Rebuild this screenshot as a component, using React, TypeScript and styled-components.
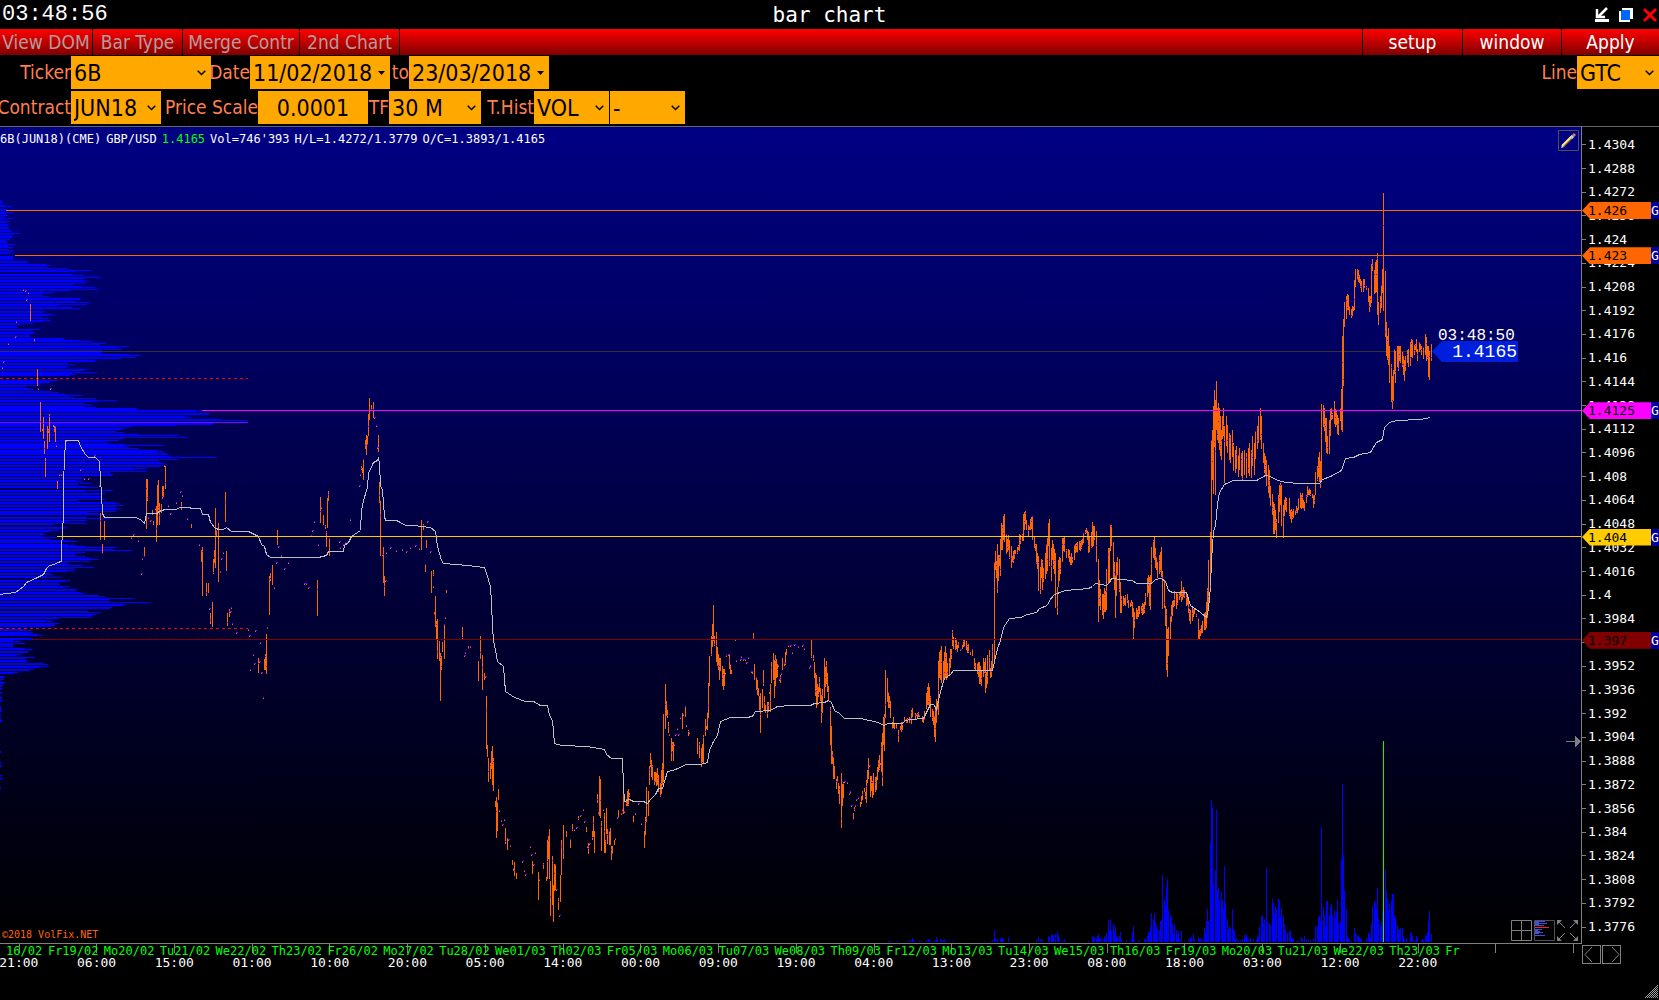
import React from "react";
import styled, { createGlobalStyle } from "styled-components";

/* ---------- data ---------- */

const CHART_W = 1581;
const CHART_H = 816;

// Every series is stored in thirds of a unit, relative to the origin of its segment.
type Segment = { x: number; y: number; d: string };

// "x,y" is a single trade, "x,high,low" is a bar.
const priceSegments: Segment[] = [
  {
    x: 0,
    y: 53,
    d: `70,330 76,335 85,339 79,360 49,427 46,471 25,492 10,547 7,564 102,478,488 115,627 151,627 169,798 178,887 184,885 241,870 253,899 265,897 298,918 283,829 198,783
91,372,422 112,568,618 121,666,756 130,711,777 127,747,753 133,783,822 136,834,891 142,738,806 145,747,760 148,702,786 160,736,740 163,738,756 166,738,786 172,903,927 301,999,1080 307,1092,1122 313,1023,1080 439,897,1047 442,897,963 445,1016 451,1023 457,990,1006 460,1023,1035 466,988 469,978,1085 472,915,1036 475,900,990 478,969,1036 484,972,999 487,918,958 490,918,950 493,858 496,858,927 505,978 511,1002 529,971 541,936 547,950 544,966,990 562,1017 574,1032,1044 646,984,1164 649,1050,1072 655,1029,1206 676,936,1026
393,1074 400,1065 416,1084 433,1102,1131 427,1137 424,1183 598,1095 604,1110,1146 607,1101,1248 619,1209,1248 625,1209,1239 628,1287 631,1299,1332 637,1266,1341 640,1137,1182 643,1110,1150 661,1176 664,1137 670,1119 679,1113,1173 682,1299,1338 688,1287,1312 694,1284 690,1296 697,1332 709,1359 745,1350 748,1368 760,1425 763,1452 752,1470 766,1353 775,1434,1479 778,1446 781,1389 785,1479 790,1556 794,1437,1470 797,1422,1470 799,1362,1482 802,1344 808,1188,1305 811,1180,1205 817,1155,1215 823,1224 829,1149 832,1050,1095 835,1101 844,1130 853,1167 865,1149 913,1212 919,1212 925,1224 934,1070 937,1053 943,1026 952,1200,1308 955,1095 961,951,1029 964,984 970,1005,1035 976,1035,1047 979,1053,1101 982,954,1044 985,933,963 988,1074,1128 1018,1086 1021,1104 1030,1095 1036,1090 1042,1090 1051,1020 1078,918 1081,885
1084,858,870 1087,864,880 1090,837,900 1096,780,806 1099,765,825 1102,770,798 1105,702,768 1108,654,720 1114,675,690 1120,666,714 1123,714 1129,738 1133,804 1135,765,816 1138,906,970 1141,963,1128 1150,1101,1210 1153,1188,1248 1147,1125 1159,1119 1171,1104 1189,1113 1156,1203
1207,1110 1219,1116 1231,1104 1245,1098 1257,1107 1263,1020,1110 1269,1032,1050 1281,1026 1278,1080,1104 1290,1116 1299,1170,1188`,
  },
  {
    x: 380,
    y: 433,
    d: `136,12,35 154,33,98 160,83 163,158,166 166,108,200 169,183,237 172,177,296 178,243,303 181,279,423 184,288,330 187,246,276 193,192,297 196,174 199,90,100 247,201,237 253,290 256,279 265,258,268 271,261 295,303,363 301,228,297 307,285,390 313,339,360 316,351 319,408,567 322,555,592 325,594,666 331,609,657 334,573,627 337,558,675 340,594,693 346,723,742 349,711,834 352,726,812 355,687,720 358,750,757 364,785 367,795 373,780 376,804,852 382,834,870 385,840 391,860 397,900,915 400,924,933 403,906,948 409,939,957 427,906 433,933 436,945 451,863 454,887 457,903,942 460,915 466,879 475,936,1020 479,962 490,909,927 499,951,963 502,840,957 505,828,897 508,807,957 511,963,1068 517,888,1035 520,975,1086 523,912,993 526,912,990 529,992 535,1014,1050 538,1068 541,945,1026 544,840,945 550,795,897 559,813,831 571,837,864 577,792,813 583,812 589,804 595,768,780 601,770 610,752 613,788 619,801,816 622,861 625,850,882 628,852 637,813,840 640,768,830 643,813,879 652,702,729 655,760 658,648,768 661,657,775 664,783,873 670,750 673,760,879 676,840,879 679,744,822 682,807,852 688,813,855 691,804,855 694,858,900 697,858,882 703,840,855 706,838 712,776 715,750,775 724,762 727,750 730,681,762 733,758 739,717,738 742,693,738 745,687,738 748,699,711 760,768,787 766,762 775,732`,
  },
  {
    x: 640,
    y: 473,
    d: `4,674 13,693,744 16,651,705 19,561,666 25,573,648 28,498,555 31,459,502 34,480,531 37,495,540 43,516,555 46,516,546 49,516,558 52,506,558 55,525,576 61,549,591 64,510,582 67,489,555 70,342,546 76,252,387 79,303,348 82,330,354 85,366,399 88,405 94,414,483 97,426,452 100,426,483 103,437 107,407 112,387 115,405 121,354 127,339,387 130,345 136,318,351 139,378 145,390,408 148,399 172,414,462 178,426,474 184,444,501 187,432,486 190,405,489 196,357,408 199,378,387 202,336,390 205,249,354 208,168,258 214,108,168 217,72,141 220,15,122 223,108,138 229,96,186 232,141,198 235,162,210 238,174,240 241,174,213 247,198,258 250,207,270 253,207,258 256,219,225 259,167,171 265,165 268,162,207 271,192,221 274,210,221 286,120 289,183 301,180 304,173 310,182 316,180 319,190 325,174 334,216 337,213,222 340,99,120 343,192,240 349,231,270 352,240,285 355,264,288 358,288,336 361,279,399 367,267,324 370,210,258 373,288,330 376,315,340 382,306,354 385,306,336 388,276,282 391,252,336 394,186,249 400,159,240 403,180,294 406,165,258 409,177,234 412,192,231 415,200 418,240 421,225,250 424,219,225 427,174,210 433,189,198 436,156,195 439,147,165 445,140 451,140 457,160 463,136 475,141 487,140 493,148 508,206 511,200 514,117,174 520,165,183 523,186,234 526,219,288 529,225,324 532,252,315 535,261,290 538,231,276 541,264,303 544,285,369 547,267,339 553,174,294 556,201,262 559,183,252 562,219,276 565,258,303 571,321,435 574,378,492 577,453,492 580,471,537 583,498,537 589,537,567 592,528,546 595,549,582 598,558,612 604,519,684 607,552,618 610,546,594 613,546 622,549 628,584 631,576 634,618 640,639,660 643,621,633 646,618 649,601 655,594 661,606,621 664,588,612 667,573,600 673,566,577 676,576,597 679,540,609 682,510,550 685,474,537 688,500 691,528,591 694,530,576 697,543,594 700,519,585 706,531,576 709,530,573 712,501,540 715,480,516 718,465,510 721,489,492 724,426,516 727,399,558 730,351,435 733,342,453 736,210,354 742,234,306 745,276,324 748,288,324 751,303,354 757,366,387 760,351,384 763,372,387 769,372,387 775,390,426 781,378,390 784,366,396 787,366,390 793,352,367 799,357,368 802,354,368 808,352,369 811,357 814,330,372 817,324,350 826,340,357 829,346 832,340,354 835,336,350 838,345,350 847,350,368 850,351,368 853,333,360 859,279,327 862,261,315 865,249,315 868,261,324 871,289,351 877,327,363 880,333,375 883,348,411 886,318,426 889,297,369 892,303,330 895,183,345 898,156,234 901,150,240 904,138,249 910,183,249 913,156,240 916,138,234 919,159,240 922,190,234 928,174,225 931,147,204 934,147,177 937,90,138 940,111,147 946,114,150 949,117,147 952,135,157 955,128,145 961,150 967,135,147 970,121,141 973,120,140 979,123,150 982,135,159 985,132,160 991,157,165 997,148,168 1003,174,207 1006,189,210 1012,189,222 1015,186,231 1018,186,252 1021,198,252 1024,210,258 1030,174,231 1033,186,219 1036,174,279 1039,216,264 1042,165,252 1048,150,210 1051,204,234 1054,183,231 1057,132,210`,
  },
  {
    x: 940,
    y: 353,
    d: `163,246,546 166,213,270 169,243,294 172,192,339 175,225,303 178,225,258 181,177,288 184,129,210 187,135,210 190,108,180 193,102,186 199,162,222 202,177,216 205,165,210 208,180,237 214,198,264 217,228,246 220,213,248 223,210,237 226,210,222 232,201,222 235,195,210 238,162,213 241,165,192 247,162,183 250,102,183 253,96,150 256,93,132 259,120,150 265,135,168 268,138,150 271,117,150 274,111,147 277,108,180 283,171,204 286,192,213 289,192,252 292,219,267 295,228,333 301,261,342 304,237,294 307,240,330 310,264,306 316,219,297 319,192,282 322,174,273 325,129,198 328,117,258 334,204,303 337,180,240 340,192,267 343,207,282 346,219,384 352,321,405 355,240,321 358,231,303 361,234,282 367,174,246 370,174,213 373,168,216 379,207,234 385,207,234 388,210,246 391,228,255 394,220,255 397,231,250 403,195,240 406,192,220 409,189,216 412,186,220 418,183,210 421,183,213 424,180,207 427,177,195 430,159,189 436,150,162 439,144,160 442,150,180 445,156,219 448,168,216 454,156,204 457,126,201 460,138,198 463,138,180 469,153,246 475,237,426 478,300,378 481,327,390 487,342,405 490,342,417 493,324,396 496,333,396 499,267,390 505,204,312 508,204,303 511,135,213 514,135,198 520,186,297 523,246,330 526,285,414 529,246,348 532,231,285 538,237,336 541,306,399 544,348,399 550,348,378 553,354,375 556,345,378 562,342,370 565,360,384 571,366,381 574,360,378 577,366,411 580,384,477 583,396,444 589,384,417 592,390,417 595,378,410 598,378,402 604,378,399 607,369,405 610,372,403 613,366,400 616,339,375 622,294,351 625,285,339 628,291,378 631,285,390 634,201,312 640,180,234 643,171,240 646,204,264 649,231,270 652,246,294 658,225,282 661,216,276 664,201,291 667,273,387 673,300,384 676,378,438 679,387,570 682,447,591 685,441,528 691,408,477 694,375,426 697,363,408 700,360,384 703,333,378 709,339,387 712,342,375 718,336,360 721,333,351 724,303,366 727,330,360 730,321,351 733,330,354 739,342,378 742,354,375 745,363,399 748,387,423 751,390,432 757,384,423 760,387,411 763,384,402 769,402,411 775,414,480 778,450,480 781,447,468 784,435,462 787,423,460 793,399,450 796,396,450 799,366,444 802,324,414 805,240,390 811,156,321
814,-120,219 817,-150,0 820,-220,45 823,-270,-100 826,-240,45 829,-297,-150 832,-215,-120 835,-230,-110 838,-215,-90 841,-190,-70 844,-150,-60 847,-190,-120 850,-215,-130 853,-160,10 859,-190,-100 862,-165,-80 868,-140,-60 871,-135,-50 877,-150,-70 880,-110,-25 886,-90,-20 889,-100,-30 895,-75,-8 898,-95,-30 904,-80,-10 907,-85,4 913,-90,-15 919,-80,-5 925,-95,-20 928,-110,-10 934,-90,-5 937,-130,-40 943,-110,-15 946,-145,-60 952,-160,-90 955,-190,-110 961,-216,-120 964,-190,-90 970,-110,-50 973,-80,-20 976,-70,-10
979,-60,18 985,-45,39 988,-30,54 991,18,78 997,42,105 1000,66,162 1003,72,162 1006,90,150 1009,117,174 1015,45,129 1018,15,96 1021,9,75 1024,15,138 1030,75,174 1033,57,108 1036,51,90 1039,54,96 1048,54,108 1051,90,117 1054,87,129 1057,93,117 1060,87,114 1066,90,105 1069,78,100 1072,84,99 1075,54,90`,
  },
  {
    x: 1300,
    y: 113,
    d: `0,757,805 3,765,808 6,760,806 9,780,808 12,786,812 18,765,790 21,738,770 24,750,765 27,744,765 30,750,768 36,762,775 40,765,803 43,765,792 46,697,765 52,680,725 55,651,710 58,636,725 61,663,744 64,492,720 70,495,560 73,504,572 76,534,606 79,534,640 82,590,645 88,540,641 91,508,590 94,505,540 97,520,537 103,484,552 106,507,560 109,513,555 112,525,583 115,534,584 121,505,545 124,447,570 127,288,576 130,237,438 133,186,262 139,168,237 142,162,210 145,165,210 148,200,228 154,207,234 157,198,228 160,198,212 163,120,210 166,87,140 172,87,120 175,90,126 178,105,130 181,117,144 184,125,158 190,117,155 193,118,144 199,138,150 205,144,186 208,170,219 211,170,204 214,72,190 217,57,93 223,90,162 226,66,160 229,60,156 232,39,225 235,186,255 241,170,222 244,135,204 247,87,160 250,-139,216 256,93,290 259,246,348 262,290,363 265,264,375 268,320,432 274,372,486 277,408,507 280,390,483 283,327,402 286,333,429 292,318,381 295,318,393 298,318,363 301,320,372 307,336,380 310,348,405 313,360,423 316,350,396 322,330,369 325,327,381 331,306,378 334,297,350 337,300,354 343,315,345 346,312,330 349,297,336 352,327,362 358,306,336 361,312,330 364,318,344 370,321,357 376,282,345 379,291,363 382,318,357 385,318,411 388,333,420 394,312,363`,
  },
];

const averageSegments: Segment[] = [
  {
    x: 0,
    y: 53,
    d: `0,1244 18,1239 45,1237 70,1220 78,1206 105,1194 130,1184 140,1164 148,1157 163,1153 172,1147 184,1145 184,1110 187,1050 190,1010 190,915 193,830 196,790 196,781 235,781 241,800 256,822 265,832 286,832 298,843 301,900 304,940 307,1000 313,1012 406,1012 420,1017 433,1029 439,1000 472,1000 475,994 487,992 493,988 530,988 538,982 570,982 572,985 602,986 608,1003 626,1004 632,1026 645,1044 658,1048 670,1048 678,1042 694,1053 745,1055 775,1068 785,1092 793,1100 800,1122 811,1132 955,1132 978,1126 985,1114 1030,1114 1033,1096 1045,1087 1055,1068 1080,1050 1084,990 1090,960 1102,922 1106,880 1120,848 1132,842 1136,836 1138,850 1141,915 1147,930 1153,1010 1156,1021 1190,1021 1200,1026 1215,1035`,
  },
  {
    x: 380,
    y: 433,
    d: `100,-104 150,-99 165,-87 172,-40 177,-20 184,0 190,10 225,13 262,15 285,18 313,22 322,50 331,80 334,130 337,200 340,240 346,270 352,305 370,320 376,393 402,411 435,424 460,425 480,436 501,437 508,465 517,482 523,549 545,556 622,560 672,569 680,583 694,595 727,595 730,680 732,723 748,718 760,724 790,724`,
  },
  {
    x: 640,
    y: 473,
    d: `22,610 30,598 46,584 55,566 66,564 82,513 98,510 120,502 136,493 180,493 202,487 208,450 220,424 232,405 242,363 272,353 318,351 338,348 346,335 390,331 412,320 450,316 512,316 522,310 553,306 565,301 575,306 583,330 598,340 613,355 660,355 715,367 730,376 745,371 787,371 797,362 815,357 850,354 862,330 870,312 880,314 889,328 900,275 913,235 931,222 940,211`,
  },
  {
    x: 940,
    y: 353,
    d: `157,570 163,545 172,505 181,480 190,443 207,416 240,411 262,403 288,396 298,385 321,375 328,360 342,343 375,331 445,324 458,318 466,310 500,315 508,308 514,296 576,302 590,309 633,311 645,299 665,294 675,303 684,330 697,338 738,338 752,375 780,398 798,411 806,385 812,320 815,240 820,155 826,135 832,70 838,38 854,12 880,2 948,1 975,-14 990,-12 1000,-4 1015,1 1035,7`,
  },
  {
    x: 1300,
    y: 113,
    d: `0,730 57,730 66,718 90,710 124,692 135,654 160,651 178,644 210,638 230,608 247,597 252,562 268,547 290,541 360,538 392,532`,
  },
];

// "x,height"
const volumeSegments: Segment[] = [
  {
    x: 888,
    y: CHART_H - 1,
    d: `0,3 3,3 9,3 24,3 57,4 60,3 66,5 72,12 75,5 81,3 93,3 99,3 114,5 120,8 123,5 129,3 138,5 144,14 147,6`,
  },
  {
    x: 940,
    y: CHART_H - 1,
    d: `0,8 3,5 10,6 14,8 18,4 36,4 132,3 150,3 156,5 163,35 166,8 172,8 181,10 184,14 187,12 190,8 205,14 242,3 290,5 295,14 301,8 307,5 325,17 328,14 334,20 337,23 340,17 346,23 352,32 355,20 358,11 367,5 373,8 410,3 446,3 457,17 460,11 463,14 469,8 472,17 475,23 478,11 481,11 487,8 493,17 496,11 499,26 505,65 508,35 511,65 514,32 520,53 523,32 526,47 529,14 532,17 538,17 541,29 544,5 559,5 574,8 577,29 580,47 583,5 595,5 613,5 616,11 622,17 625,29 628,29 631,44 634,86 640,68 643,86 646,56 649,47 652,38 658,35 661,62 664,65 667,200 673,128 676,107 679,164 682,188 685,95 691,80 694,74 697,53 700,26 703,53 709,35 712,23 715,32 718,8 724,32 733,3 745,8 751,14 754,11 760,23 763,8 775,14 778,8 781,11 787,8 793,41 796,26 799,62 802,98 805,62 811,296 814,425 817,405 820,173 826,215 829,395 832,155 835,161 838,126 844,149 847,125 850,101 853,227 856,116 862,68 865,38 868,47 871,41 877,98 880,38 883,32 886,8 889,11 895,5 901,5 907,8 913,20 916,14 919,23 922,11 928,8 931,11 940,8 949,5 952,20 955,14 958,44 964,77 967,80 970,56 973,68 979,221 982,59 988,56 991,50 997,128 1000,116 1003,83 1006,107 1009,98 1015,128 1018,125 1021,74 1024,101 1030,77 1033,53 1036,35 1042,26 1048,32 1051,32 1054,14 1057,8 1060,11 1069,3 1075,3 1084,14 1087,8 1093,17 1099,8 1105,5 1111,5 1120,8`,
  },
  {
    x: 1260,
    y: CHART_H - 1,
    d: `166,47 172,47 175,74 178,77 181,62 184,344 190,104 193,80 196,50 199,122 202,122 208,80 211,104 214,113 217,80 223,95 226,71 229,90 232,125 235,56 241,60 244,245 247,473 250,260 253,155 259,98 262,17 265,11 268,5 274,3 283,41 286,26 292,17 295,20 298,14 301,8 304,8 313,3 319,11 325,26 328,26 331,11 334,53 337,107 343,122 346,116 349,98 352,161 355,68 361,47 364,59 367,92 376,218 379,152 382,131 385,95 388,116 394,122 397,143 400,143 403,80 406,71 412,50 415,38 418,35 421,41 427,41 430,17 433,8 439,11 448,3 451,26 454,29 457,17 463,5 469,17 472,11 484,5 487,8 490,5 496,20 499,17 502,29 505,62 508,92 514,23`,
  },
];

// Volume profile rows: "y,first,second", in thirds.
const profileRows = `60,6,3 66,6,6 75,15,36 87,21,18 96,39,18 105,24,15 114,39,12 123,27,21 132,24,24 141,27,27 150,33,33 159,60,39 168,39,36 177,30,18 183,21,24 192,45,24 198,24,39 207,24,42 216,39,24 228,42,39 234,39,39
243,81,87 252,138,153 261,144,204 270,276,228 282,222,255 291,303,255 300,249,261 309,258,219 318,246,285 327,297,213 336,162,132 345,129,147 354,243,240 363,231,273 372,261,174 381,216,240 393,135,132 402,162,147 411,126,147 420,153,129 429,99,63 438,48,51 447,120,96 456,102,102 465,90,93 474,195,186 480,243,279 489,321,300 498,387,352 507,366,306 516,306,306 522,387,423 531,408,363 540,288,286 549,204,225 558,207,198 567,267,252 576,291,216 582,228,210 600,174,150 606,150,123 615,123,78 624,87,102 633,150,177 642,198,246 651,222,288 660,351,291 669,252,276 678,255,288 684,411,411 690,606,588 699,627,627 708,555,573 717,663,744 729,640,640 735,528,396 744,378,363 753,351,372 762,417,537 771,564,372 780,357,318 789,327,375 795,492,375 801,388,417 810,471,471 813,492,471 819,501,508 828,510,651 837,537,478 846,480,495 855,495,480 864,443,402 873,443,333 882,339,336 891,243,258 900,231,249 909,276,234 918,261,294 930,339,255 939,315,303 948,303,303 957,315,234 966,345,357 975,369,348 984,363,348 993,348,264 999,297,318 1011,262,330 1020,262,204 1029,258,162 1041,198,195 1050,177,150 1059,132,140 1068,128,170 1077,155,210 1083,231,180 1092,204,228 1098,258,351 1107,342,396 1116,255,228 1125,228,255 1134,273,297 1143,270,207 1152,207,249 1161,282,225 1170,225,201 1179,150,162 1188,138,186 1200,210,195 1209,178,180 1218,210,189 1227,231,228 1236,243,255 1245,294,315 1254,402,327 1263,330,450 1272,378,369 1281,336,330 1293,264,303 1302,288,276 1311,276,177 1320,138,159 1329,180,165 1335,165,154 1347,75,96 1356,99,87 1362,114,129 1374,99,99 1380,40,63 1389,75,39 1395,40,42 1404,72,99 1413,87,84 1422,66,48 1431,105,78 1440,84,78 1449,132,144 1458,147,120 1467,102,90 1476,54,40 1488,12,15 1497,12,4 1506,15,12 1515,9,8 1524,6,3 1536,6,3 1551,6,6 1560,9,3 1578,4,4 1584,4,4 1590,4,6 1602,3,3 1611,4,4 1620,6,6 1713,3,3 1746,4,4 1755,6,4 1785,6,3 1794,9,3 1821,3,3`;

const minutes = ["21:00", "06:00", "15:00", "01:00", "10:00", "20:00", "05:00", "14:00", "00:00", "09:00", "19:00", "04:00", "13:00", "23:00", "08:00", "18:00", "03:00", "12:00", "22:00", "", ""];

const days = ["16/02", "Fr19/02", "Mo20/02", "Tu21/02", "We22/02", "Th23/02", "Fr26/02", "Mo27/02", "Tu28/02", "We01/03", "Th02/03", "Fr05/03", "Mo06/03", "Tu07/03", "We08/03", "Th09/03", "Fr12/03", "Mo13/03", "Tu14/03", "We15/03", "Th16/03", "Fr19/03", "Mo20/03", "Tu21/03", "We22/03", "Th23/03", "Fr"];

const prices = Array.from({ length: 34 }, (_, i) => String((14304 - 16 * i) / 10000));

const levels = [
  { price: "1.426", y: 83, from: 6, color: "#ff6600", ink: "#000000" },
  { price: "1.423", y: 128, from: 15, color: "#ff6600", ink: "#000000" },
  { price: "1.4125", y: 283, from: 202, color: "#ff00ff", ink: "#000000" },
  { price: "1.404", y: 409, from: 57, color: "#ffcc00", ink: "#000000" },
  { price: "1.397", y: 512, from: 32, color: "#800000", ink: "#000000" },
];

/* ---------- path builders ---------- */

const parse = (d: string) => d.trim().split(/\s+/).map((p) => p.split(",").map(Number));
const px = (v: number) => Math.floor(v / 3);

const buildPrices = () => {
  let bars = "";
  let closes = "";
  priceSegments.forEach((s) =>
    parse(s.d).forEach(([x, hi, lo], i) => {
      const cx = s.x + px(x);
      const top = s.y + px(hi);
      if (lo === undefined) {
        bars += `M${cx} ${top}h1v1h-1z`;
        closes += `M${cx} ${top - 1}h${1 + (i % 2)}v1h-${1 + (i % 2)}z`;
        return;
      }
      const h = Math.max(2, Math.round((lo - hi) / 3));
      bars += `M${cx} ${top}h1v${h}h-1z`;
      if (i % 3 !== 1) {
        const at = top + Math.floor((((i * 7) % 11) / 11) * h);
        closes += `M${cx} ${at}h1v1h-1z`;
      }
    })
  );
  return { bars, closes };
};

const { bars, closes } = buildPrices();

const volume = volumeSegments
  .map((s) =>
    parse(s.d)
      .map(([x, h]) => {
        const v = Math.max(1, Math.round(h / 3));
        return `M${s.x + px(x)} ${s.y - v}h1v${v}h-1z`;
      })
      .join("")
  )
  .join("");

const profile = parse(profileRows)
  .map(([y, a, b]) => `M0 ${53 + px(y)}h${px(a)}v1h-${px(a)}zM0 ${54 + px(y)}h${px(b)}v1h-${px(b)}z`)
  .join("");

const average = averageSegments
  .map((s) => parse(s.d).map(([x, y]) => `${s.x + px(x)},${s.y + px(y)}`).join(" "))
  .join(" ");

/* ---------- styles ---------- */

const uiFont = `"DejaVu Sans Condensed", "Noto Sans", sans-serif`;
const monoFont = `"DejaVu Sans Mono", monospace`;
const thinMono = `"Liberation Mono", monospace`;

const GlobalStyle = createGlobalStyle`
  *, *::before, *::after { box-sizing: border-box; }
  body { margin: 0; background: #000; }
  button, input, select { margin: 0; border: 0; border-radius: 0; padding: 0; background: none; color: inherit; font: inherit; }
  svg { display: block; }
`;

const Window = styled.main`
  display: flex;
  flex-direction: column;
  min-height: 100vh;
  overflow: hidden;
  background: #000;
  color: #fff;
  font-family: ${uiFont};
  font-size: 19px;
`;

const TitleBar = styled.header`
  display: grid;
  grid-template-columns: 1fr auto 1fr;
  align-items: center;
  height: 29px;
  padding: 0 2px;
`;

const Clock = styled.time`
  font: 22px/28px ${thinMono};
`;

const Title = styled.h1`
  margin: 0;
  font: 21px/28px ${monoFont};
`;

const WindowButtons = styled.div`
  display: flex;
  justify-content: flex-end;
  gap: 10px;
`;

const IconButton = styled.button`
  width: 14px;
  height: 16px;
`;

const MenuBar = styled.nav`
  display: flex;
  height: 26px;
  background: linear-gradient(#ff0000, #800000);
`;

const MenuButton = styled.button<{ $width: number; $muted?: boolean }>`
  width: ${(p) => p.$width}px;
  border-${(p) => (p.$muted ? "right" : "left")}: 1px solid #000;
  color: ${(p) => (p.$muted ? "#b49c9c" : "#ffffff")};
  line-height: 24px;
  white-space: nowrap;
`;

const Spacer = styled.div`
  flex: 1;
`;

const Form = styled.form`
  display: flex;
  flex-direction: column;
  gap: 2px;
  padding: 1px 0 2px;
`;

const FormRow = styled.div`
  display: flex;
  height: 33px;
`;

const Label = styled.label<{ $width: number }>`
  flex: none;
  width: ${(p) => p.$width}px;
  display: flex;
  justify-content: flex-end;
  color: #ff7f50;
  line-height: 32px;
  white-space: nowrap;
`;

const Field = styled.div<{ $width: number; $gap?: number }>`
  flex: none;
  display: grid;
  align-items: center;
  width: ${(p) => p.$width}px;
  margin-left: ${(p) => p.$gap ?? 0}px;
  background: #ffa800;
  color: #000;
  font-size: 23px;

  > * { grid-area: 1 / 1; }
  > svg { justify-self: end; margin-right: 5px; pointer-events: none; }
`;

const Select = styled.select`
  appearance: none;
  width: 100%;
  height: 33px;
  padding-left: 3px;
  outline: 0;
`;

const TextInput = styled.input<{ $center?: boolean }>`
  width: 100%;
  height: 33px;
  padding-left: ${(p) => (p.$center ? 0 : 3)}px;
  text-align: ${(p) => (p.$center ? "center" : "left")};
  outline: 0;
`;

const Workspace = styled.section`
  flex: 1;
  display: grid;
  grid-template-columns: minmax(0, 1fr) 78px;
  grid-template-rows: minmax(640px, 1fr) 56px;
  border-top: 1px solid #666;
`;

const Chart = styled.div`
  position: relative;
  background: linear-gradient(#000084, #000000);
  border-bottom: 1px solid #808080;
`;

const Plot = styled.svg`
  position: absolute;
  inset: 0;
  width: 100%;
  height: 100%;
`;

const Summary = styled.p`
  position: relative;
  display: flex;
  gap: 5px;
  margin: 0;
  padding: 4px 0;
  font: 12px/16px ${monoFont};
  white-space: nowrap;
`;

const Last = styled.span`
  color: #00ff00;
`;

const Copyright = styled.small`
  position: absolute;
  left: 2px;
  bottom: 0;
  color: #ff6600;
  font: 10px/16px ${monoFont};
`;

const Pencil = styled.button`
  position: absolute;
  top: 3px;
  right: 2px;
  width: 21px;
  height: 21px;
`;

const ChartTools = styled.div`
  position: absolute;
  right: 3px;
  bottom: 2px;
  display: flex;
  gap: 2px;
`;

const Tool = styled.button`
  width: 21px;
  height: 21px;
`;

const LastTag = styled.div`
  position: absolute;
  left: ${(1432 / CHART_W) * 100}%;
  top: ${(204 / CHART_H) * 100}%;
  width: 86px;
`;

const LastTime = styled.time`
  display: block;
  padding-left: 6px;
  font: 16px/10px ${thinMono};
`;

const LastPrice = styled.div`
  height: 21px;
  padding-right: 1px;
  background: #001fdc;
  clip-path: polygon(0 50%, 10px 0, 100% 0, 100% 100%, 10px 100%);
  font: 18px/22px ${thinMono};
  text-align: right;
`;

const PriceAxis = styled.div`
  position: relative;
  overflow: hidden;
  border-left: 1px solid #808080;
`;

const PriceList = styled.ol`
  display: flex;
  flex-direction: column;
  height: 100%;
  margin: 0;
  padding: 6px 0 5px;
  list-style: none;
  font: 13px/16px ${monoFont};
`;

const PriceItem = styled.li`
  flex: 1;
  display: flex;
  align-items: center;
  gap: 2px;

  &::before {
    content: "";
    width: 4px;
    height: 1px;
    background: #808080;
  }
`;

const Flag = styled.div`
  position: absolute;
  left: 0;
  display: flex;
  width: 100%;
  height: 17px;
  margin-top: -8px;
  font: 13px/18px ${monoFont};
`;

const FlagPrice = styled.span<{ $color: string; $ink: string }>`
  flex: 1;
  padding-left: 6px;
  background: ${(p) => p.$color};
  color: ${(p) => p.$ink};
  clip-path: polygon(0 50%, 8px 0, 100% 0, 100% 100%, 8px 100%);
`;

const FlagMark = styled.span`
  width: 8px;
  background: #0000a0;
`;

const TimeAxis = styled.div`
  position: relative;
  overflow: hidden;
  white-space: nowrap;
`;

const Ticks = styled.svg`
  position: absolute;
  top: 0;
  left: 0;
  width: 100%;
  height: 9px;
`;

const Days = styled.div`
  position: relative;
  display: grid;
  grid-template-columns: 48fr repeat(25, 56fr) 136fr;
  color: #00ff00;
  font: 12px/14px ${monoFont};

  > :first-child { padding-left: 6px; }
`;

const Hours = styled.div`
  display: grid;
  grid-template-columns: repeat(21, 1fr);
  margin: -2px -31px 0 -20px;
  font: 13px/14px ${monoFont};
  text-align: center;
`;

const Corner = styled.div`
  display: flex;
  flex-direction: column;
  justify-content: space-between;
  padding: 1px 1px 2px;
`;

const Pager = styled.div`
  display: flex;
  gap: 1px;
`;

const PageButton = styled.button`
  width: 19px;
  height: 19px;
  border: 1px solid #808080;
`;

const Grip = styled.svg`
  align-self: flex-end;
`;

/* ---------- parts ---------- */

const Chevron = () => (
  <svg width="9" height="6" viewBox="0 0 9 6" fill="none" stroke="#000" strokeWidth="1.5">
    <path d="M.7.7 4.5 4.5 8.300.7" />
  </svg>
);

const Triangle = () => (
  <svg width="7" height="4" viewBox="0 0 7 4">
    <path d="M0 0h7L3.500 4z" fill="#000" />
  </svg>
);

const Picker = ({ id, value, width, gap, name }: { id: string; value: string; width: number; gap?: number; name?: string }) => (
  <Field $width={width} $gap={gap}>
    <Select id={id} defaultValue={value} aria-label={name}>
      <option>{value}</option>
    </Select>
    <Chevron />
  </Field>
);

const DateBox = ({ id, value }: { id: string; value: string }) => (
  <Field $width={140}>
    <TextInput id={id} defaultValue={value} />
    <Triangle />
  </Field>
);

const levelTop = (y: number) => ({ top: `${(y / CHART_H) * 100}%` });

export default function App() {
  return (
    <Window>
      <GlobalStyle />
      <TitleBar>
        <Clock>03:48:56</Clock>
        <Title>bar chart</Title>
        <WindowButtons>
          <IconButton aria-label="Minimize">
            <svg width="14" height="16" viewBox="0 0 14 16">
              <path d="M0 12h14v3H0z" fill="#fff" />
              <path d="M12 1 4 9M2 2v8h8" fill="none" stroke="#fff" strokeWidth="2.500" />
            </svg>
          </IconButton>
          <IconButton aria-label="Restore">
            <svg width="14" height="16" viewBox="0 0 14 16">
              <path d="M3 1h11v11h-3v3H0V4h3z" fill="#fff" />
              <path d="M3 3h8v10H2V4h1z" fill="#0066ff" />
            </svg>
          </IconButton>
          <IconButton aria-label="Close">
            <svg width="14" height="16" viewBox="0 0 14 16">
              <path d="m1 2 12 12M13 2 1 14" stroke="#ff0000" strokeWidth="3" />
            </svg>
          </IconButton>
        </WindowButtons>
      </TitleBar>

      <MenuBar>
        <MenuButton $width={93} $muted>View DOM</MenuButton>
        <MenuButton $width={90} $muted>Bar Type</MenuButton>
        <MenuButton $width={117} $muted>Merge Contr</MenuButton>
        <MenuButton $width={100} $muted>2nd Chart</MenuButton>
        <Spacer />
        <MenuButton $width={100}>setup</MenuButton>
        <MenuButton $width={99}>window</MenuButton>
        <MenuButton $width={98}>Apply</MenuButton>
      </MenuBar>

      <Form>
        <FormRow>
          <Label $width={71} htmlFor="ticker">Ticker</Label>
          <Picker id="ticker" value="6B" width={140} />
          <Label $width={39} htmlFor="from">Date</Label>
          <DateBox id="from" value="11/02/2018" />
          <Label $width={19} htmlFor="until">to</Label>
          <DateBox id="until" value="23/03/2018" />
          <Spacer />
          <Label $width={36} htmlFor="line">Line</Label>
          <Picker id="line" value="GTC" width={82} />
        </FormRow>
        <FormRow>
          <Label $width={71} htmlFor="contract">Contract</Label>
          <Picker id="contract" value="JUN18" width={90} />
          <Label $width={97} htmlFor="scale">Price Scale</Label>
          <Field $width={110}>
            <TextInput id="scale" defaultValue="0.0001" $center />
          </Field>
          <Label $width={21} htmlFor="frame">TF</Label>
          <Picker id="frame" value="30 M" width={92} />
          <Label $width={53} htmlFor="hist">T.Hist</Label>
          <Picker id="hist" value="VOL" width={75} />
          <Picker id="mode" value="-" width={75} gap={1} name="Histogram mode" />
        </FormRow>
      </Form>

      <Workspace>
        <Chart>
          <Plot viewBox={`0 0 ${CHART_W} ${CHART_H}`} preserveAspectRatio="none" shapeRendering="crispEdges">
            <path d={profile} fill="#0000ff" />
            <path d={volume} fill="#0000ff" />
            <rect x="0" y="224" width="1432" height="1" fill="#333333" />
            <path d="M0 251.5H248M0 501.5H248" stroke="#ff0000" strokeDasharray="3 3" />
            <rect x="0" y="295" width="248" height="1" fill="#8000ff" />
            <path d={bars} fill="#ff6600" />
            <path d={closes} fill="#8000ff" />
            {levels.map((l) => (
              <rect key={l.price} x={l.from} y={l.y} width={CHART_W - l.from} height="1" fill={l.color} />
            ))}
            <polyline points={average} transform="translate(.5 .5)" fill="none" stroke="#c0c0c0" />
            <rect x="1383" y="614" width="1" height="201" fill="#00ff00" />
            <path d="M1566 614h9v-6l6 6.500-6 6v-5.500h-9z" fill="#808080" />
          </Plot>
          <Summary>
            <span>6B(JUN18)(CME)</span>
            <span>GBP/USD</span>
            <Last>1.4165</Last>
            <span>Vol=746'393</span>
            <span>H/L=1.4272/1.3779</span>
            <span>O/C=1.3893/1.4165</span>
          </Summary>
          <Pencil aria-label="Draw">
            <svg width="21" height="21" viewBox="0 0 21 21">
              <path d="M.5.5h20v20H.5z" fill="none" stroke="#505050" />
              <path d="m5 16 10-10" stroke="#8a6a20" strokeWidth="3" />
              <path d="m4 16 10-10" stroke="#ffe48a" strokeWidth="2" />
              <path d="m13 8 2-2" stroke="#b8d8c0" strokeWidth="3" />
              <path d="m15 6 2-2" stroke="#d07880" strokeWidth="3" />
              <path d="m3 18 1-3 2 2z" fill="#d8d8d8" />
            </svg>
          </Pencil>
          <LastTag>
            <LastTime>03:48:50</LastTime>
            <LastPrice>1.4165</LastPrice>
          </LastTag>
          <Copyright>©2018 VolFix.NET</Copyright>
          <ChartTools>
            <Tool aria-label="Grid">
              <svg width="21" height="21" viewBox="0 0 21 21" fill="none" stroke="#808080">
                <path d="M.5.5h20v20H.5zM10.500 0v21M0 10.500h21" />
              </svg>
            </Tool>
            <Tool aria-label="Profile">
              <svg width="21" height="21" viewBox="0 0 21 21">
                <path d="M.5.5h20v20H.5z" fill="none" stroke="#505050" />
                <path d="M1 1.500h10M1 3.500h12M1 5.500h9M1 9.500h7M1 11.500h5M1 12.500h8M1 15.500h10M1 2.500h4M1 4.500h4M1 10.500h3M1 13.500h4" stroke="#4050d0" />
                <path d="M1 7.500h14" stroke="#ff2020" />
              </svg>
            </Tool>
            <Tool aria-label="Fit">
              <svg width="21" height="21" viewBox="0 0 21 21">
                <path d="M0 0h5L0 5zM21 0v5L16 0zM0 21v-5l5 5zM21 21h-5l5-5z" fill="#808080" />
                <path d="m2 2 6 6M19 2l-6 6M2 19l6-6M19 19l-6-6" stroke="#808080" />
              </svg>
            </Tool>
          </ChartTools>
        </Chart>

        <PriceAxis>
          <PriceList>
            {prices.map((p) => (
              <PriceItem key={p}>{p}</PriceItem>
            ))}
          </PriceList>
          {levels.map((l) => (
            <Flag key={l.price} style={levelTop(l.y)}>
              <FlagPrice $color={l.color} $ink={l.ink}>{l.price}</FlagPrice>
              <FlagMark>G</FlagMark>
            </Flag>
          ))}
        </PriceAxis>

        <TimeAxis>
          <Ticks viewBox={`0 0 ${CHART_W} 9`} preserveAspectRatio="none" shapeRendering="crispEdges">
            {minutes.map((_, i) => (
              <rect key={i} x={Math.round(18.5 + 77.73 * i)} y="0" width="1" height="9" fill="#808080" />
            ))}
          </Ticks>
          <Days>
            {days.map((d) => (
              <span key={d}>{d}</span>
            ))}
          </Days>
          <Hours>
            {minutes.map((m, i) => (
              <span key={i}>{m}</span>
            ))}
          </Hours>
        </TimeAxis>

        <Corner>
          <Pager>
            <PageButton aria-label="Back">
              <svg width="17" height="17" viewBox="0 0 17 17" fill="none" stroke="#808080">
                <path d="M9 1 2 8.500 9 16" />
              </svg>
            </PageButton>
            <PageButton aria-label="Forward">
              <svg width="17" height="17" viewBox="0 0 17 17" fill="none" stroke="#808080">
                <path d="m9 1 7 7.500L9 16" />
              </svg>
            </PageButton>
          </Pager>
          <Grip width="15" height="15" viewBox="0 0 15 15" shapeRendering="crispEdges">
            <defs>
              <pattern id="dots" width="2" height="2" patternUnits="userSpaceOnUse">
                <path d="M0 0h1v1H0zM1 1h1v1H1z" fill="#a0a0a0" />
              </pattern>
            </defs>
            <path d="M15 0v15H0z" fill="url(#dots)" />
          </Grip>
        </Corner>
      </Workspace>
    </Window>
  );
}
